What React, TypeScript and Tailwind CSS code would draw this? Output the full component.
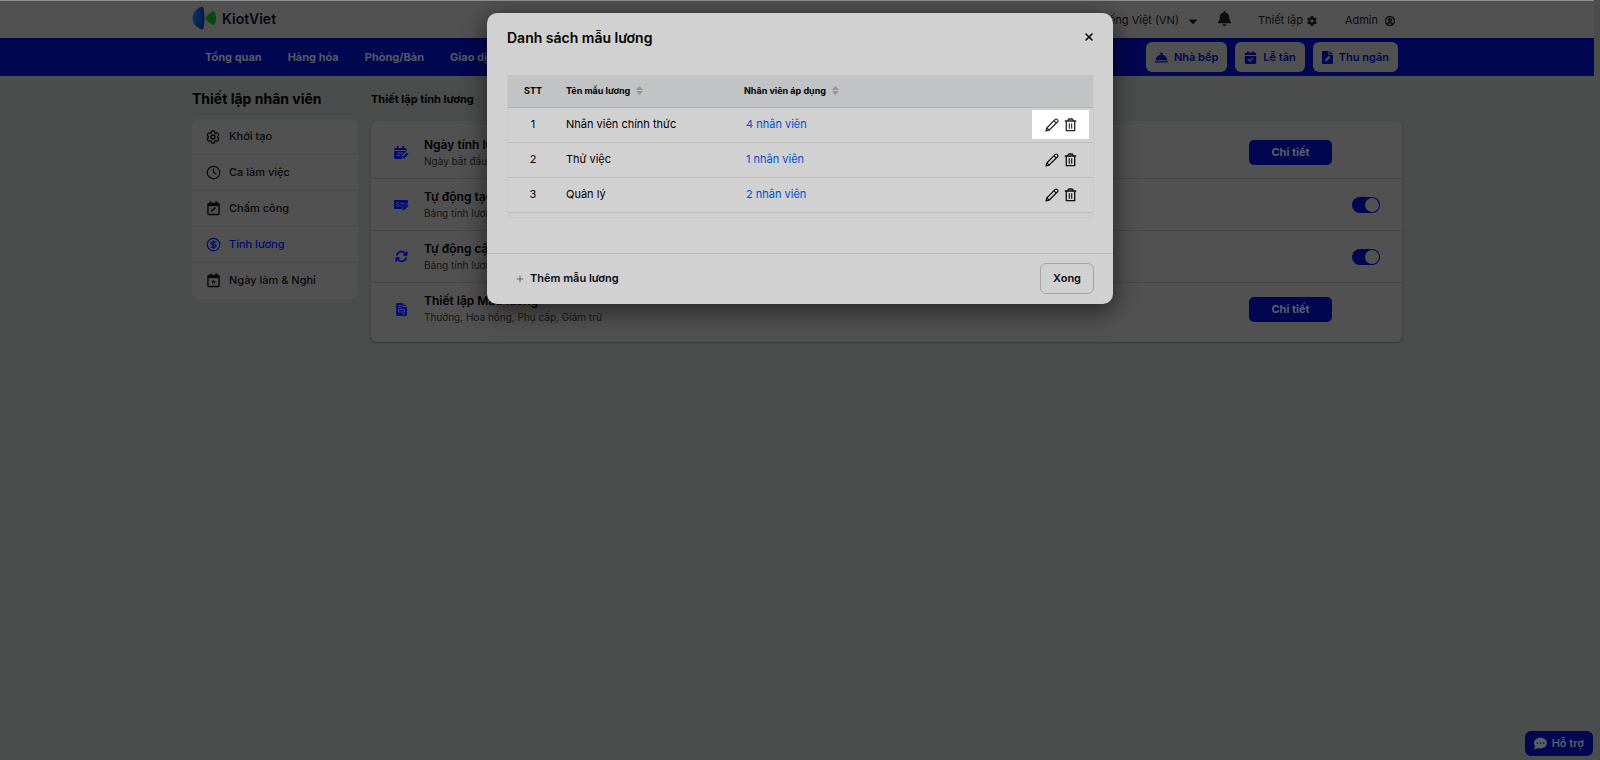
import type { ReactNode } from "react";
import {
  FaBell,
  FaBellConcierge,
  FaCalendarCheck,
  FaCommentDots,
  FaGear,
  FaRegCircleUser,
  FaCaretDown,
  FaArrowsRotate,
} from "react-icons/fa6";
import { HiOutlineCog6Tooth } from "react-icons/hi2";
import { Clock, CircleDollarSign, Plus, X } from "lucide-react";

function Logo() {
  return (
    <svg width="24" height="24" viewBox="0 0 24 24" aria-hidden="true">
      <defs>
        <linearGradient id="wing" x1="0" x2="1" y1="0.4" y2="0.6">
          <stop offset="0" stopColor="#0b3a5c" />
          <stop offset="1" stopColor="#03124f" />
        </linearGradient>
      </defs>
      <path d="M11 .5C4.500 1.500.5 6.500.5 12S4.500 22.500 11 23.500c2-6.500 2-16.500 0-23Z" fill="url(#wing)" />
      <path d="M13.500 12.500c0-1.500 5-6.500 8-7.500 1.800 2 2.500 4.500 2.500 7.500s-.7 5-2.500 6.500c-3-1-8-5-8-6.500Z" fill="#074a0c" />
    </svg>
  );
}

function PencilIcon() {
  return (
    <svg width="14" height="14" viewBox="0 0 14 14" fill="none" stroke="currentColor" strokeWidth="1.200" strokeLinejoin="round" aria-hidden="true">
      <path d="m1 13 .8-3L10.200 1.400a1.300 1.300 0 0 1 1.900 0l.5.500a1.300 1.300 0 0 1 0 1.900l-8.600 8.400Z" />
      <path d="m8.900 2.700 2.400 2.400M1.900 10l2.100 2.100" />
    </svg>
  );
}

function TrashIcon() {
  return (
    <svg width="13" height="14" viewBox="0 0 13 14" fill="none" stroke="currentColor" strokeWidth="1.300" aria-hidden="true">
      <path d="M.8 3h11.400M2.300 3v9.700h8.400V3M4 2.800C4 1.300 4.500 1 5.300 1h2.400C8.500 1 9 1.300 9 2.800" />
      <path d="M5.300 5.200v5.600M7.700 5.200v5.600" strokeWidth="1.100" />
    </svg>
  );
}

function CalendarFrame({ children }: { children: ReactNode }) {
  return (
    <svg width="13" height="15" viewBox="0 0 14 16" fill="none" stroke="currentColor" strokeWidth="1.500" aria-hidden="true">
      <rect x="1" y="2.500" width="12" height="12" rx="1" />
      <path d="M1 4h12" strokeWidth="3" />
      <path d="M4 .5v3M10 .5v3" strokeWidth="1.800" />
      {children}
    </svg>
  );
}

function CalendarPen() {
  return (
    <svg width="15" height="14" viewBox="0 0 15 14" aria-hidden="true">
      <path d="M1.500 2h10A1.300 1.300 0 0 1 12.500 3v2L8 9.500V13H1.500A1.300 1.300 0 0 1 .2 12V3A1.300 1.300 0 0 1 1.500 2Z" fill="currentColor" />
      <path d="M3.500 0v3M9.200 0v3" stroke="currentColor" strokeWidth="1.600" />
      <path d="M.2 4.500h12M3 7h6M3 9.500h3.500" stroke="#515151" strokeWidth="1" />
      <path d="m8 12.800.5-2.300 4.200-4.200 2 2-4.300 4.200Z" fill="currentColor" stroke="#515151" strokeWidth=".6" />
    </svg>
  );
}

function MoneyPen() {
  return (
    <svg width="15" height="12" viewBox="0 0 15 12" aria-hidden="true">
      <path d="M1.200 1h11.600A1 1 0 0 1 14 2v2L7.500 10H1.200A1 1 0 0 1 0 9V2A1 1 0 0 1 1.200 1Z" fill="currentColor" />
      <path d="M4.700 3.500H3.200c-1 0-1 1.700 0 1.800h.9c1 0 1 1.900 0 1.900H2.500M6.500 4.500h4.500M6.500 6.800h2" stroke="#515151" strokeWidth=".9" fill="none" />
      <path d="m8 11.300.5-2.200 4.300-4.300 2 2-4.400 4.200Z" fill="currentColor" stroke="#515151" strokeWidth=".6" />
    </svg>
  );
}

function InvoiceIcon() {
  return (
    <svg width="11" height="13" viewBox="0 0 11 13" aria-hidden="true">
      <path d="M1.200 0H7l4 3.500V12a1 1 0 0 1-1 1H1.200a1 1 0 0 1-1-1V1a1 1 0 0 1 1-1Z" fill="currentColor" />
      <path d="M7 0v3.500h4M2 2.500h3M2 4.500h3M2.500 6.500h6v2.500h-6zM6 11h3" stroke="#515151" strokeWidth=".9" fill="none" />
    </svg>
  );
}

function FilePenIcon() {
  return (
    <svg width="11" height="13" viewBox="0 0 11 13" aria-hidden="true">
      <path d="M1 0h5.500v4H11v8a1 1 0 0 1-1 1H1a1 1 0 0 1-1-1V1a1 1 0 0 1 1-1ZM7.500 0 11 3.200H7.500Z" fill="currentColor" />
      <path d="m2.800 10.500.5-2L7 4.800l1.500 1.500-3.700 3.700Z" fill="#515151" />
    </svg>
  );
}

function SortIcon() {
  return (
    <svg width="7" height="9" viewBox="0 0 7 9" fill="#92969b" aria-hidden="true">
      <path d="M3.500 0 7 4H0ZM3.500 9 0 5h7Z" />
    </svg>
  );
}

const menu = ["Tổng quan", "Hàng hóa", "Phòng/Bàn", "Giao dịch"];

const shortcuts = [
  { label: "Nhà bếp", icon: <FaBellConcierge size={13} /> },
  { label: "Lễ tân", icon: <FaCalendarCheck size={13} /> },
  { label: "Thu ngân", icon: <FilePenIcon /> },
];

const sections = [
  { label: "Khởi tạo", icon: <HiOutlineCog6Tooth size={16} strokeWidth={2} /> },
  { label: "Ca làm việc", icon: <Clock size={15} /> },
  { label: "Chấm công", icon: <CalendarFrame><path d="m4.500 11 4.500-4" strokeWidth="1.800" /></CalendarFrame> },
  { label: "Tính lương", icon: <CircleDollarSign size={15} />, active: true },
  {
    label: "Ngày làm & Nghỉ",
    icon: (
      <CalendarFrame>
        <path d="m7 7 .8 1.500 1.600.2-1.200 1.100.3 1.600L7 10.600l-1.500.8.3-1.600-1.200-1.100 1.600-.2Z" fill="currentColor" stroke="none" />
      </CalendarFrame>
    ),
  },
];

const settings = [
  { title: "Ngày tính lương", note: "Ngày bắt đầu", icon: <CalendarPen /> },
  { title: "Tự động tạo", note: "Bảng tính lương", icon: <MoneyPen />, toggle: true },
  { title: "Tự động cập nhật", note: "Bảng tính lương", icon: <FaArrowsRotate size={13} />, toggle: true },
  { title: "Thiết lập Mẫu lương", note: "Thưởng, Hoa hồng, Phụ cấp, Giảm trừ", icon: <InvoiceIcon /> },
];

const templates = [
  { name: "Nhân viên chính thức", staff: 4, highlighted: true },
  { name: "Thử việc", staff: 1 },
  { name: "Quản lý", staff: 2 },
];

function Toggle({ label }: { label: string }) {
  return (
    <label className="relative block h-4 w-7 cursor-pointer">
      <input type="checkbox" defaultChecked aria-label={label} className="peer sr-only" />
      <span className="flex h-4 w-7 items-center rounded-full bg-[#00064f] px-px peer-checked:justify-end">
        <span className="size-3.5 rounded-full bg-[#515151]" />
      </span>
    </label>
  );
}

function TemplateDialog() {
  return (
    <div
      role="dialog"
      aria-labelledby="dialog-title"
      className="w-full max-w-[626px] rounded-[10px] bg-[#d1d1d1] text-black shadow-[0_6px_24px_rgba(0,0,0,0.6)]"
    >
      <header className="flex h-12 items-center justify-between pr-[18px] pl-5">
        <h2 id="dialog-title" className="text-[14px] font-semibold">Danh sách mẫu lương</h2>
        <button type="button" aria-label="Đóng"><X size={12} strokeWidth={3} /></button>
      </header>
      <div className="mr-[19px] ml-5 mt-[14px] overflow-hidden rounded-b-md border border-t-0 border-[#cacaca] pb-1">
        <table className="w-full table-fixed border-collapse text-[11px]">
          <colgroup>
            <col className="w-[50px]" />
            <col className="w-[178px]" />
            <col />
            <col className="w-20" />
          </colgroup>
          <thead>
            <tr className="h-8 border-b border-[#b0b3b6] bg-[#c1c3c5] text-[9px]">
              <th className="font-bold">STT</th>
              <th className="pl-2 text-left font-bold">
                <span className="flex items-center gap-1.5">Tên mẫu lương <SortIcon /></span>
              </th>
              <th className="pl-2 text-left font-bold">
                <span className="flex items-center gap-1.5">Nhân viên áp dụng <SortIcon /></span>
              </th>
              <th aria-label="Thao tác" />
            </tr>
          </thead>
          <tbody>
            {templates.map((t, i) => (
              <tr key={t.name} className="h-[35px] border-b border-[#bdbec0]">
                <td className="text-center">{i + 1}</td>
                <td className="pl-2">{t.name}</td>
                <td className="pl-2.5"><a href="#staff" className="text-[#0050cb]">{t.staff} nhân viên</a></td>
                <td className="pr-1">
                  <div className={t.highlighted
                    ? "ml-auto flex h-[29px] w-[57px] items-center justify-center gap-[5px] bg-white text-[#20242c]"
                    : "ml-auto flex h-[29px] w-[57px] items-center justify-center gap-[5px] text-[#0b0e14]"}
                  >
                    <button type="button" aria-label={`Sửa ${t.name}`}><PencilIcon /></button>
                    <button type="button" aria-label={`Xóa ${t.name}`}><TrashIcon /></button>
                  </div>
                </td>
              </tr>
            ))}
          </tbody>
        </table>
      </div>
      <footer className="mt-[35px] flex h-[51px] items-center justify-between border-t border-[#bdbdbd] pr-[19px] pl-7">
        <button type="button" className="flex items-center gap-[5px] text-[11px] font-semibold text-[#060b18]">
          <Plus size={10} strokeWidth={2} className="text-[#555]" />
          Thêm mẫu lương
        </button>
        <button type="button" className="h-[31px] rounded-md border border-[#a3a6aa] px-3 text-[11px] font-semibold text-[#060b18]">
          Xong
        </button>
      </footer>
    </div>
  );
}

export default function App() {
  return (
    <div className="relative min-h-screen overflow-hidden bg-[#4b4d4c] font-['Inter','Noto_Sans',sans-serif] text-black">
      <div className="mr-1.5">
        <header className="h-[38px] border-t border-[#8c8e8d] bg-[#515151]">
          <div className="mx-auto flex h-full max-w-[1210px] items-center justify-between pr-[7px]">
            <a href="#home" className="flex items-center gap-1.5 pb-[3px] text-[14px] font-semibold text-[#050812]">
              <Logo />
              KiotViet
            </a>
            <div className="flex items-center pt-0.5 text-[11px] text-[#0c0d0e]">
              <button type="button" className="flex items-center gap-2">Tiếng Việt (VN) <FaCaretDown size={12} /></button>
              <button type="button" aria-label="Thông báo" className="ml-[18px] pb-1"><FaBell size={15} /></button>
              <button type="button" className="ml-[26px] flex items-center gap-1">Thiết lập <FaGear size={10} /></button>
              <button type="button" className="ml-7 flex items-center gap-[7px]">Admin <FaRegCircleUser size={10} stroke="currentColor" strokeWidth={30} /></button>
            </div>
          </div>
        </header>
        <nav className="h-[38px] bg-[#00064f]">
          <div className="mx-auto flex h-full max-w-[1210px] items-center justify-between pr-1 pl-[13px]">
            <ul className="flex gap-[26px] text-[11px] font-bold text-[#565b62]">
              {menu.map((m) => <li key={m}><a href="#menu">{m}</a></li>)}
            </ul>
            <div className="flex gap-2">
              {shortcuts.map((s) => (
                <button key={s.label} type="button" className="flex h-[30px] items-center gap-1.5 rounded-md bg-[#515151] px-[9px] text-[11px] font-semibold text-[#00064f]">
                  {s.icon}
                  {s.label}
                </button>
              ))}
            </div>
          </div>
        </nav>
        <main className="mx-auto flex max-w-[1210px] gap-[13px] pt-[13px]">
          <aside className="w-[166px] shrink-0">
            <h1 className="h-[30px] text-[14px] leading-5 font-bold whitespace-nowrap">Thiết lập nhân viên</h1>
            <ul className="rounded-md bg-[#515151] text-[11px] font-medium">
              {sections.map((s) => (
                <li key={s.label} className="border-b border-[#494949] last:border-transparent">
                  <a href="#section" className={s.active ? "flex h-[35px] items-center gap-2 pl-[13px] text-[#000b6e]" : "flex h-[35px] items-center gap-2 pl-[13px] text-[#08090a]"}>
                    <span className="flex w-4 justify-center">{s.icon}</span>
                    {s.label}
                  </a>
                </li>
              ))}
            </ul>
          </aside>
          <section className="min-w-0 flex-1">
            <h2 className="h-8 text-[11px] leading-5 font-bold">Thiết lập tính lương</h2>
            <div className="divide-y divide-[#474747] rounded-md bg-[#515151] pt-1.5 pb-[7px] shadow-[0_1px_2px_rgba(0,0,0,0.3)]">
              {settings.map((s) => (
                <div key={s.title} className="flex h-[52px] items-center pl-[22px]">
                  <span className="flex w-4 justify-center text-[#00087a]">{s.icon}</span>
                  <div className="ml-[15px] flex-1">
                    <h3 className="text-[12px] leading-[17px] font-semibold">{s.title}</h3>
                    <p className="text-[10px] leading-[17px] text-[#161616]">{s.note}</p>
                  </div>
                  {s.toggle ? (
                    <div className="pr-[22px]"><Toggle label={s.title} /></div>
                  ) : (
                    <button type="button" className="mr-[70px] h-[25px] w-[83px] rounded-[5px] bg-[#00064f] text-[11px] font-bold text-[#5b6068]">Chi tiết</button>
                  )}
                </div>
              ))}
            </div>
          </section>
        </main>
      </div>
      <div className="absolute inset-x-0 top-[13px] flex justify-center">
        <TemplateDialog />
      </div>
      <button type="button" className="absolute right-[7px] bottom-1 flex h-[25px] items-center gap-[5px] rounded-md bg-[#00064f] px-[9px] text-[11px] font-semibold text-[#5b6068]">
        <FaCommentDots size={13} />
        Hỗ trợ
      </button>
    </div>
  );
}
